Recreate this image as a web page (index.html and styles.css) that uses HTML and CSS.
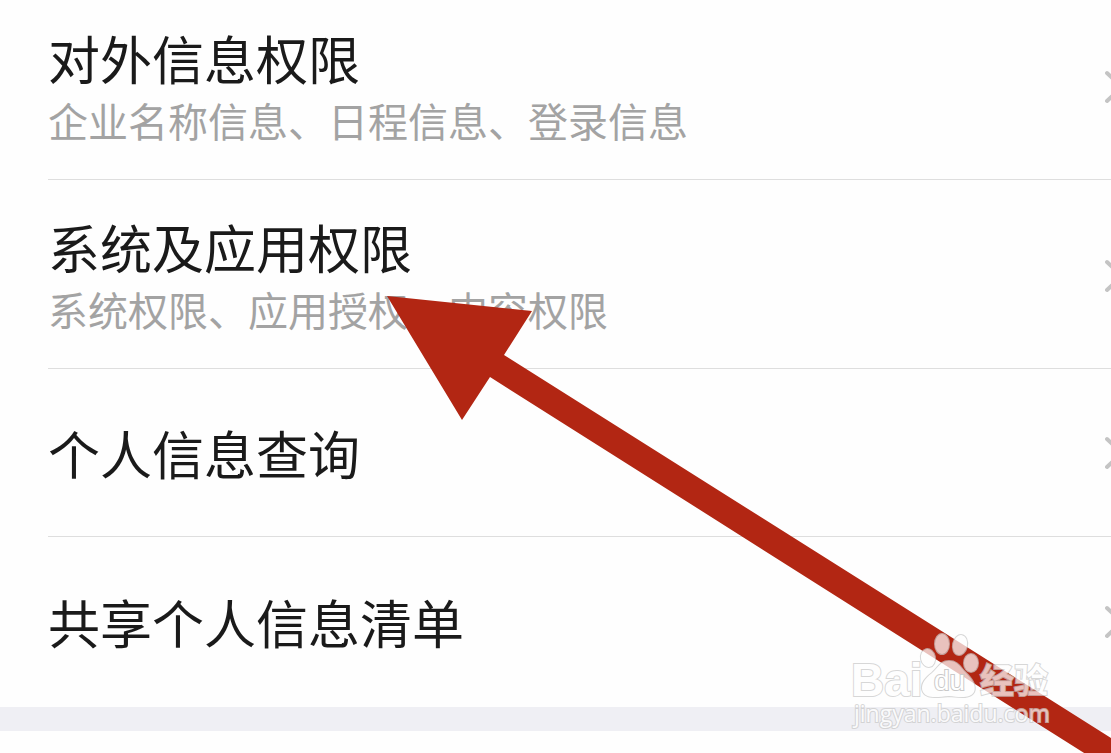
FILE: index.html
```html
<!DOCTYPE html>
<html lang="zh-CN">
<head>
    <meta charset="UTF-8">
    <meta name="viewport" content="width=device-width, initial-scale=1.0">
    <title>权限</title>
    <link rel="stylesheet" href="styles.css">
</head>
<body>
    <main class="page">
        <nav class="list">
            <a class="row double" href="#external">
                <span class="text">
                    <span class="title">对外信息权限</span>
                    <span class="desc">企业名称信息、日程信息、登录信息</span>
                </span>
                <svg class="chevron" viewBox="0 0 20 34" aria-hidden="true"><path d="M2 3L17 17L2 31"/></svg>
            </a>
            <a class="row double" href="#system">
                <span class="text">
                    <span class="title">系统及应用权限</span>
                    <span class="desc">系统权限、应用授权、内容权限</span>
                </span>
                <svg class="chevron" viewBox="0 0 20 34" aria-hidden="true"><path d="M2 3L17 17L2 31"/></svg>
            </a>
            <a class="row" href="#query">
                <span class="title">个人信息查询</span>
                <svg class="chevron" viewBox="0 0 20 34" aria-hidden="true"><path d="M2 3L17 17L2 31"/></svg>
            </a>
            <a class="row" href="#shared">
                <span class="title">共享个人信息清单</span>
                <svg class="chevron" viewBox="0 0 20 34" aria-hidden="true"><path d="M2 3L17 17L2 31"/></svg>
            </a>
        </nav>
        <div class="band"></div>

        <!-- arrow pointing at the second row -->
        <svg class="arrow" viewBox="0 0 724 474" aria-hidden="true">
            <path d="M0 0L145 15L117 59L724 442V474L103 81L75 124Z"/>
        </svg>

        <svg class="watermark" viewBox="0 0 210 106" role="img" aria-label="Baidu 经验">
            <g class="mark">
                <ellipse cx="78" cy="28" rx="7" ry="9" transform="rotate(-12 78 28)"/>
                <ellipse cx="92" cy="14" rx="7" ry="10"/>
                <ellipse cx="110" cy="15" rx="7" ry="10" transform="rotate(12 110 15)"/>
                <ellipse cx="121" cy="33" rx="7" ry="9"/>
                <path d="M99 31C90 31 88 38 82 43C74 49 70 56 73 62C77 69 87 67 99 66C109 67 120 69 124 62C127 55 121 48 115 42C110 37 108 31 99 31Z"/>
                <text class="brand" x="1" y="66">Bai</text>
                <text class="brand cjk" x="130" y="63">经验</text>
            </g>
            <text class="du" x="84" y="60">du</text>
            <text class="mark url" x="4" y="92">jingyan.baidu.com</text>
        </svg>
    </main>
</body>
</html>
```
FILE: styles.css
```css
body {
    margin: 0;
    background-color: #fefefe;
    font-family: "Noto Sans CJK SC", sans-serif;
}
.page {
    position: relative;
    min-height: 100vh;
    overflow: hidden;
}
/* the list is scrolled a little past its top */
.list {
    margin-top: -9px;
    padding-left: 48px;
}
.row {
    display: flex;
    align-items: center;
    justify-content: space-between;
    box-sizing: border-box;
    min-height: 168px;
    border-bottom: 1px solid #dedede;
    color: #1a1a1a;
    text-decoration: none;
}
.row.double {
    min-height: 189px;
    padding-top: 4px;
}
.row:last-child {
    min-height: 170px;
    border-bottom: none;
}
.text {
    display: flex;
    flex-direction: column;
    gap: 2px;
}
.title {
    font-size: 52px;
    line-height: 64px;
}
.desc {
    font-size: 40px;
    line-height: 56px;
    color: #a3a3a3;
}
.chevron {
    flex: none;
    width: 20px;
    height: 34px;
    margin-right: -14px;
    fill: none;
    stroke: #c4c4c4;
    stroke-width: 4;
    stroke-linecap: round;
}
.band {
    height: 24px;
    background-color: #efeff4;
}
.arrow {
    position: absolute;
    left: 387px;
    top: 296px;
    width: 724px;
    height: 474px;
    fill: #b22613;
}
.watermark {
    position: absolute;
    left: 850px;
    top: 630px;
    width: 210px;
    height: 106px;
    overflow: visible;
}
.mark {
    fill: #ffffff;
    stroke: #c9c9c9;
    stroke-width: 2px;
    paint-order: stroke;
    opacity: 0.72;
}
.brand {
    font-family: "Liberation Sans", sans-serif;
    font-size: 46px;
    font-weight: bold;
}
.brand.cjk {
    font-family: "Noto Sans CJK SC", sans-serif;
    font-size: 34px;
}
.du {
    font-family: "Liberation Sans", sans-serif;
    font-size: 28px;
    fill: #ffffff;
    stroke: #c9c9c9;
    stroke-width: 2px;
    paint-order: stroke;
}
.url {
    font-family: "Open Sans", sans-serif;
    font-size: 23px;
}
```
